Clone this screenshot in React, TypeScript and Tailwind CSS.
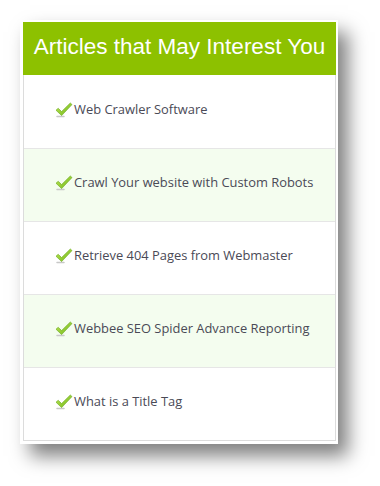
import React from 'react'

const articles = [
  'Web Crawler Software',
  'Crawl Your website with Custom Robots',
  'Retrieve 404 Pages from Webmaster',
  'Webbee SEO Spider Advance Reporting',
  'What is a Title Tag',
]

function Check() {
  return (
    <svg width="18" height="16" viewBox="0 0 18 16" className="shrink-0">
      <defs>
        <linearGradient id="chk" x1="0" y1="0" x2="1" y2="1">
          <stop offset="0" stopColor="#c2e85a" />
          <stop offset="1" stopColor="#6cb515" />
        </linearGradient>
      </defs>
      <path d="M2 14.5 L9 14.5" stroke="#c8c8c8" strokeWidth="1.5" strokeLinecap="round" />
      <path
        d="M1 8.2 L3.2 6.3 L6.6 9.6 L15.3 1 L17 2.6 L6.6 13.6 Z"
        fill="url(#chk)"
        stroke="#67a618"
        strokeWidth="0.6"
        strokeLinejoin="round"
      />
    </svg>
  )
}

export default function App() {
  return (
    <div className="w-[380px] h-[486px] bg-white pt-[20px] pl-[20px]">
      <div className="w-[318px] bg-white pl-[3px] pr-[2px] pt-[2px] pb-[3px] shadow-[10px_12px_18px_rgba(0,0,0,0.5)]">
        <div className="border-x border-b border-[#dcdcdc]">
          <div className="h-[53px] bg-[#8dc100] flex items-center justify-center -mx-px">
            <h2 className="text-white text-[22.5px] font-['Liberation_Sans',Arial,sans-serif] leading-none -mt-[2px]">
              Articles that May Interest You
            </h2>
          </div>
          {articles.map((a, i) => (
            <div
              key={a}
              className={`h-[73px] flex items-center gap-[1px] pl-[31px] pb-[4px] ${
                i > 0 ? 'border-t border-[#e6e6e6]' : ''
              } ${i % 2 === 1 ? 'bg-[#f4fdef]' : 'bg-white'}`}
            >
              <Check />
              <span className="text-[#4a4a56] text-[12.9px] font-['Open_Sans',sans-serif]">{a}</span>
            </div>
          ))}
        </div>
      </div>
    </div>
  )
}
